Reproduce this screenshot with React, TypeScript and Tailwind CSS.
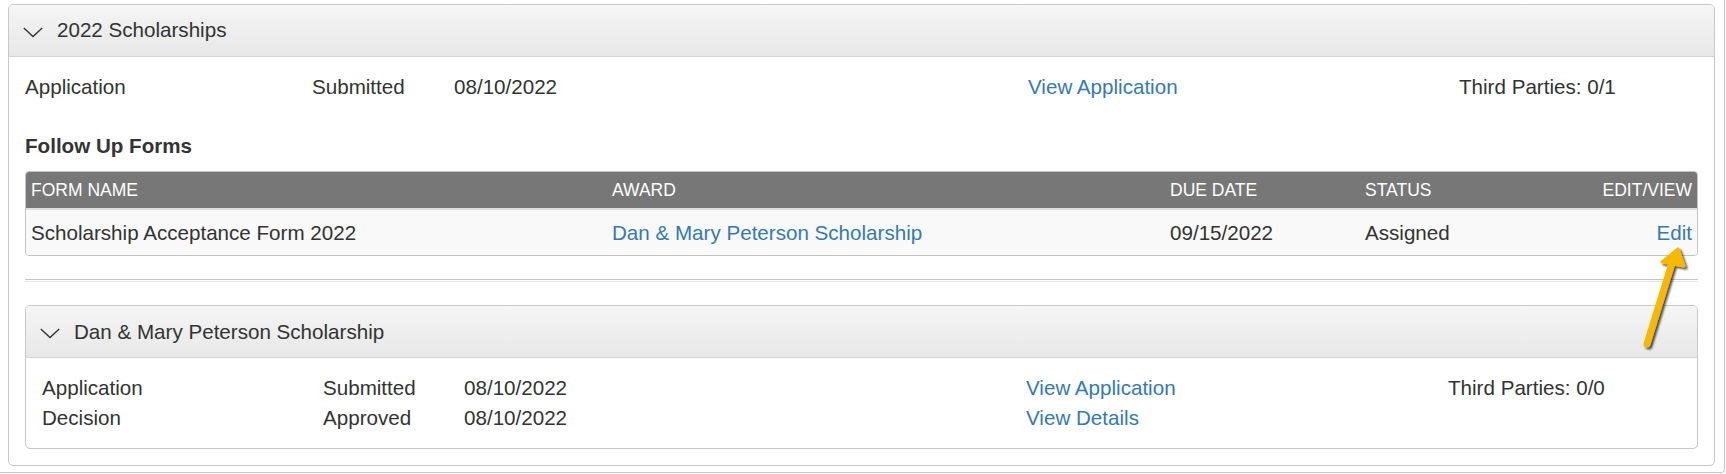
import React from "react";

const font = { fontFamily: '"Liberation Sans", Arial, sans-serif' };

function Chevron() {
    return (
        <svg width="20" height="11" viewBox="0 0 20 11" className="mt-[3px] flex-none">
            <polyline points="0.8,1 10,9.6 19.2,1" fill="none" stroke="#333" strokeWidth="1.4" />
        </svg>
    );
}

function PanelHeader({ title }: { title: string }) {
    return (
        <div className="flex h-[52px] items-center gap-[14px] border-b border-[#d4d4d4] bg-gradient-to-b from-[#f5f5f5] to-[#e8e8e8] pl-[14px] text-[20.6px] text-[#333] rounded-t-[4px]">
            <Chevron />
            <span>{title}</span>
        </div>
    );
}

function FollowUpTable() {
    return (
        <div className="mt-[10px] overflow-hidden rounded-[4px] border border-[#c4c4c4]">
            <div className="grid h-[38px] grid-cols-[581px_558px_195px_1fr_auto] items-center border-b-[2px] border-[#dedede] bg-[#777777] px-[5px] text-[17.5px] text-white">
                <span>FORM NAME</span>
                <span>AWARD</span>
                <span>DUE DATE</span>
                <span>STATUS</span>
                <span>EDIT/VIEW</span>
            </div>
            <div className="grid h-[45px] grid-cols-[581px_558px_195px_1fr_auto] items-center bg-[#f9f9f9] px-[5px] text-[20.6px] text-[#333]">
                <span>Scholarship Acceptance Form 2022</span>
                <a className="text-[#337ab7]">Dan &amp; Mary Peterson Scholarship</a>
                <span>09/15/2022</span>
                <span>Assigned</span>
                <a className="text-[#337ab7]">Edit</a>
            </div>
        </div>
    );
}

export default function App() {
    return (
        <div className="relative h-[474px] w-[1726px] bg-white" style={font}>
            <div className="h-[473px] w-[1725px] rounded-br-[4px] border-r border-b border-[#c8c8c8] pl-[8px] pt-[4px]">
                <div className="w-[1707px] rounded-[5px] border border-[#c8c8c8] bg-white">
                    <PanelHeader title="2022 Scholarships" />

                    <div className="px-[16px] pt-[15px] pb-[16px] text-[20.6px] leading-[30px] text-[#333]">
                        {/* summary row */}
                        <div className="grid grid-cols-[287px_142px_574px_431px_1fr]">
                            <span>Application</span>
                            <span>Submitted</span>
                            <span>08/10/2022</span>
                            <a className="text-[#337ab7]">View Application</a>
                            <span>Third Parties: 0/1</span>
                        </div>

                        <div className="mt-[29px] font-bold">Follow Up Forms</div>
                        <FollowUpTable />

                        <div className="mt-[23px] h-[3px] border-t border-b border-t-[#c6c6c6] border-b-[#e6e6e6]" />

                        {/* award panel */}
                        <div className="mt-[23px] rounded-[5px] border border-[#c8c8c8]">
                            <PanelHeader title="Dan & Mary Peterson Scholarship" />
                            <div className="px-[16px] pt-[15px] pb-[15px]">
                                <div className="grid grid-cols-[281px_141px_562px_422px_1fr]">
                                    <span>Application</span>
                                    <span>Submitted</span>
                                    <span>08/10/2022</span>
                                    <a className="text-[#337ab7]">View Application</a>
                                    <span>Third Parties: 0/0</span>
                                </div>
                                <div className="grid grid-cols-[281px_141px_562px_422px_1fr]">
                                    <span>Decision</span>
                                    <span>Approved</span>
                                    <span>08/10/2022</span>
                                    <a className="text-[#337ab7]">View Details</a>
                                    <span />
                                </div>
                            </div>
                        </div>
                    </div>
                </div>
            </div>

            {/* annotation arrow pointing at Edit */}
            <svg
                className="pointer-events-none absolute left-0 top-0"
                width="1726"
                height="474"
                viewBox="0 0 1726 474"
            >
                <defs>
                    <filter id="arrowShadow" x="-50%" y="-50%" width="200%" height="200%">
                        <feDropShadow dx="2" dy="2" stdDeviation="1.3" floodColor="#000" floodOpacity="0.7" />
                    </filter>
                </defs>
                <g filter="url(#arrowShadow)">
                    <line x1="1647" y1="344" x2="1672" y2="263" stroke="#f8b800" strokeWidth="7" strokeLinecap="round" />
                    <polygon
                        points="1678,249 1662,262 1684,266"
                        fill="#f8b800"
                        stroke="#f8b800"
                        strokeWidth="3"
                        strokeLinejoin="round"
                    />
                </g>
            </svg>
        </div>
    );
}
